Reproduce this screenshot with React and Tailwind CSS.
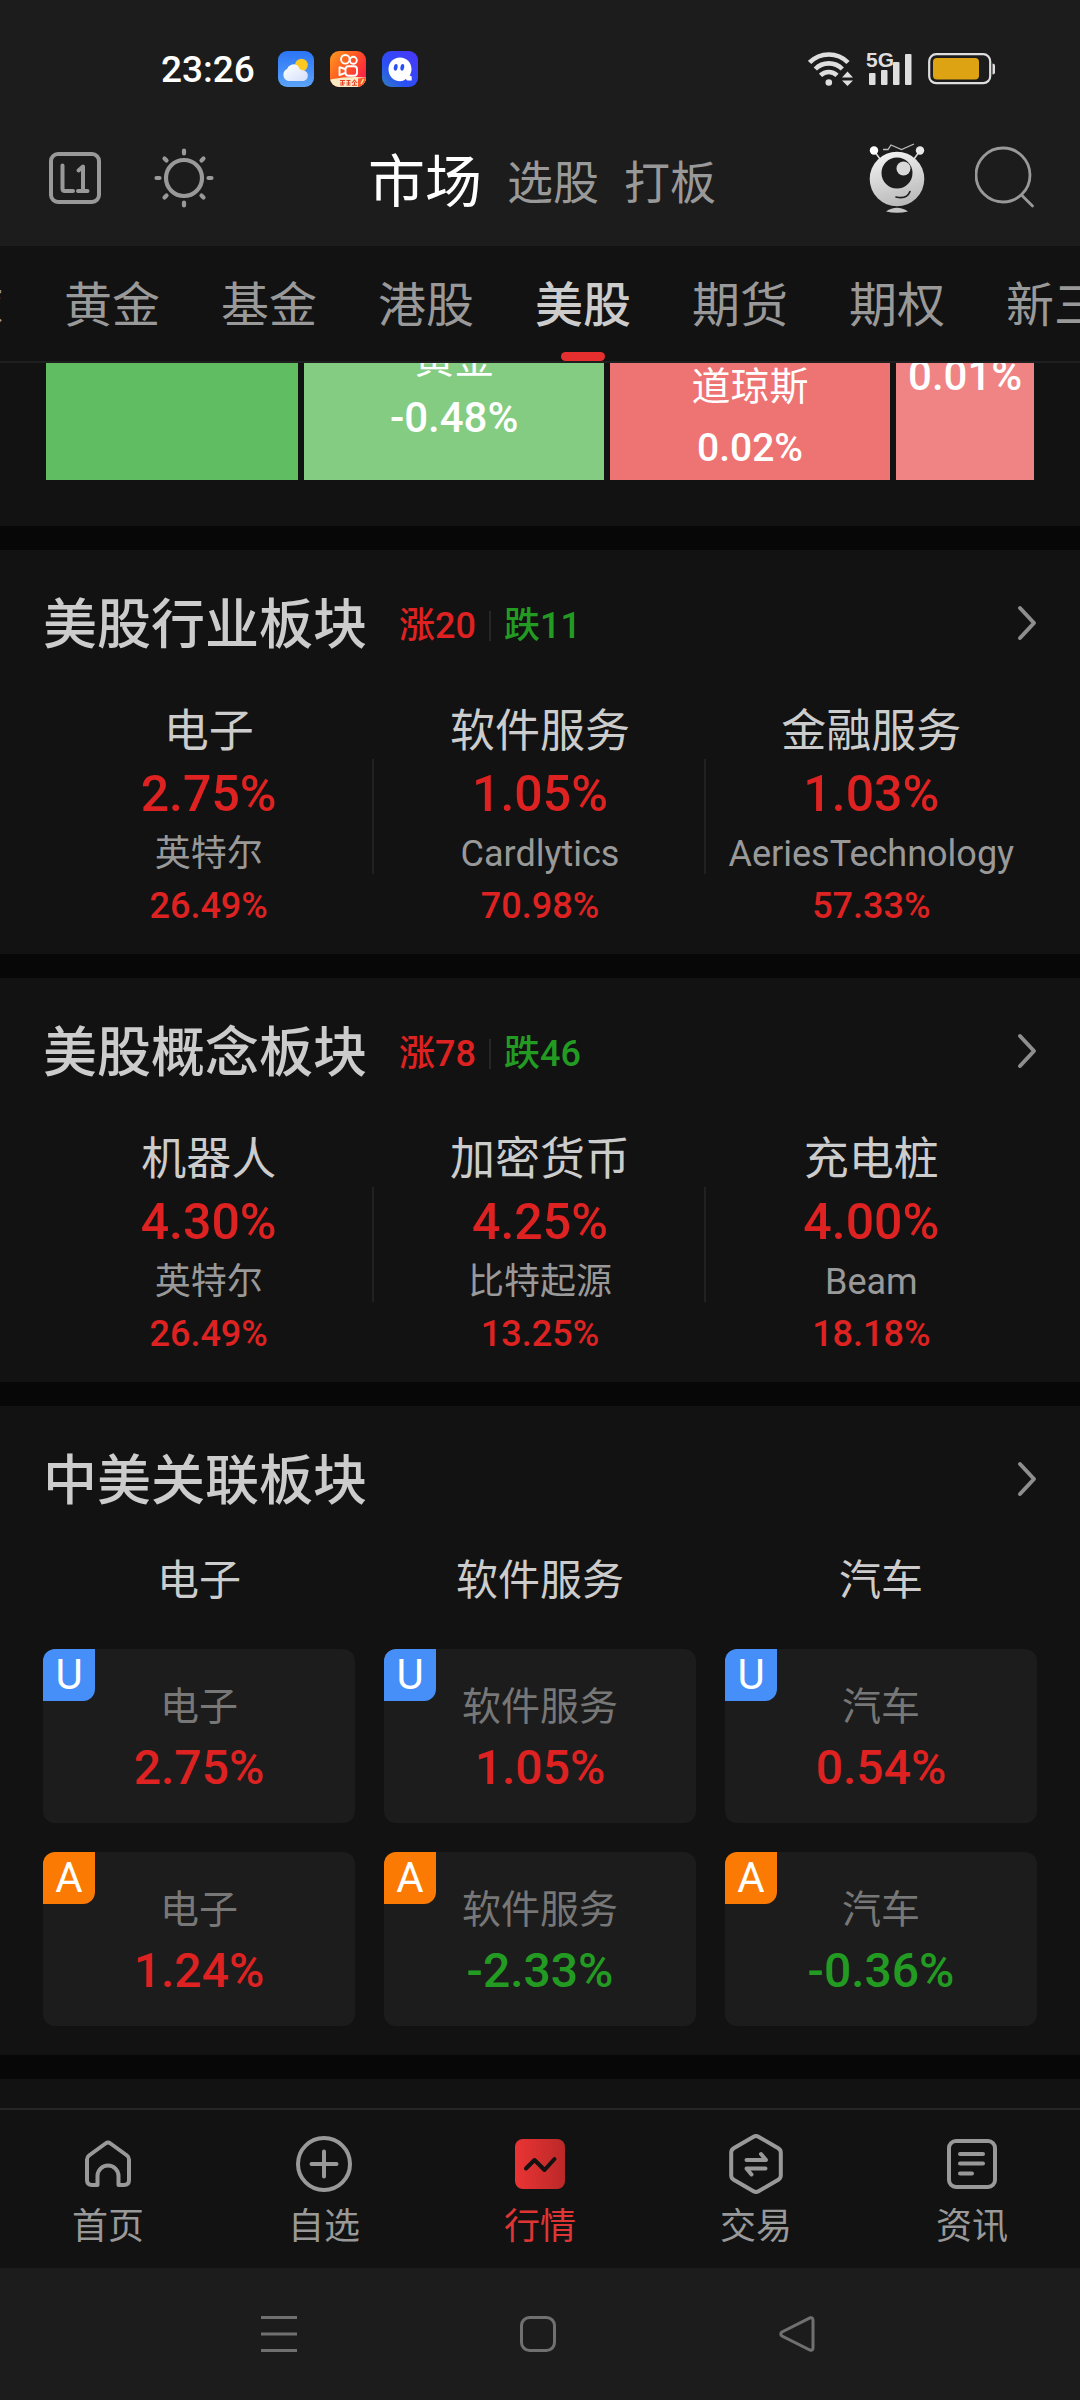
import React from "react";

const CJK = "font-[Roboto,'Noto_Sans_CJK_SC',sans-serif]";

function WeatherIcon() {
  return (
    <svg viewBox="0 0 36 36" className="size-9" role="img" aria-label="天气">
      <defs>
        <linearGradient id="sky" x1="0" y1="0" x2="0" y2="1">
          <stop offset="0" stopColor="#2b74f6" />
          <stop offset="1" stopColor="#5ba4f8" />
        </linearGradient>
        <linearGradient id="cloud" x1="0" y1="0" x2="1" y2="1">
          <stop offset="0" stopColor="#ffffff" />
          <stop offset="1" stopColor="#d3dffa" />
        </linearGradient>
      </defs>
      <rect width="36" height="36" rx="9" fill="url(#sky)" />
      <circle cx="23.5" cy="14" r="6.3" fill="#fdc921" />
      <path d="M11 30a6 6 0 0 1-5.6-6.5c0-3 1.8-4.7 3.6-5.6A7 7 0 0 1 19.5 14.5c1.8 1.7 1.7 4 4 4.5 3.5.5 6.300 1.500 6.300 5.500S27 30 24.500 30z" fill="url(#cloud)" />
    </svg>
  );
}

function VideoIcon() {
  return (
    <svg viewBox="0 0 36 36" className="size-9" role="img" aria-label="视频">
      <defs>
        <linearGradient id="vid" x1="0" y1="0" x2="1" y2="0.7">
          <stop offset="0" stopColor="#ff9b1f" />
          <stop offset="0.5" stopColor="#ff5a22" />
          <stop offset="1" stopColor="#fb1d45" />
        </linearGradient>
        <clipPath id="vidClip"><rect width="36" height="36" rx="9" /></clipPath>
      </defs>
      <g clipPath="url(#vidClip)">
        <rect width="36" height="36" fill="url(#vid)" />
        <g fill="none" stroke="#fff" strokeWidth="1.9">
          <circle cx="15.3" cy="8.3" r="4.3" />
          <circle cx="23.3" cy="9.3" r="3.5" />
          <rect x="15.5" y="15.3" width="11.5" height="9.5" rx="3" />
          <path d="M15 18l-5.500-1.800v8L15 22" strokeLinejoin="round" />
        </g>
        <path d="M0 28.500Q18 25 36 26.500V36H0z" fill="#fbe9c4" />
        <path d="M28 27.500l8-1V36h-8z" fill="#fb5b2c" />
        <path d="M10 29.500h5M10 32h5M10 34h4M12.500 29v5.500M16.500 29.500h4M16.500 32h4M16.500 34h4M18.500 29v5M22 32l2.500-3 2.500 3M22 34.300h5M24.500 31v3" stroke="#e8432c" strokeWidth="1.1" fill="none" />
        <path d="M31 33l2.500-5" stroke="#ffe08a" strokeWidth="1.6" />
      </g>
    </svg>
  );
}

function GhostIcon() {
  return (
    <svg viewBox="0 0 36 36" className="size-9" role="img" aria-label="助手">
      <defs>
        <linearGradient id="gh" x1="0" y1="1" x2="1" y2="0">
          <stop offset="0" stopColor="#2f7fbe" />
          <stop offset="0.35" stopColor="#2a50f5" />
          <stop offset="1" stopColor="#4c35fb" />
        </linearGradient>
      </defs>
      <rect width="36" height="36" rx="9" fill="url(#gh)" />
      <path d="M18 6.500c6.600 0 11.500 5 11.500 11.500 0 2.700-.8 4.800-1.800 6.500l2 1v4h-4.500l-1.400-1.500C22 29.700 20.200 30.200 18 30.200 11.500 30.200 6.500 24.800 6.500 18.200S11.500 6.500 18 6.500z" fill="#fff" />
      <ellipse cx="13.7" cy="16.3" rx="1.9" ry="3.4" fill="#2a50f5" transform="rotate(8 13.7 16.3)" />
      <ellipse cx="20.3" cy="16.3" rx="1.9" ry="3.4" fill="#2a50f5" transform="rotate(8 20.3 16.3)" />
    </svg>
  );
}

function WifiIcon() {
  return (
    <svg viewBox="0 0 46 36" className="h-9 w-[46px]" role="img" aria-label="Wi-Fi">
      <g fill="none" stroke="#dedede" strokeWidth="4.6">
        <path d="M1.600 11.500A27 27 0 0 1 40 11.500" />
        <path d="M7.300 18A19 19 0 0 1 34.300 18" />
        <path d="M12.500 24.300A12 12 0 0 1 29 24.300" />
      </g>
      <circle cx="20.8" cy="31.5" r="3.3" fill="#dedede" />
      <path d="M34 26.500l5.500-6 5.500 6zM34 29.500l5.500 5.500 5.500-5.500z" fill="#dedede" />
    </svg>
  );
}

function SignalIcon() {
  return (
    <span className="relative block h-9 w-[46px]">
      <span className="absolute top-0 left-0 font-['Liberation_Sans_Narrow','Liberation_Sans',sans-serif] text-[21px] leading-[18px] font-bold text-[#dedede]">5G</span>
      <svg viewBox="0 0 46 36" className="h-9 w-[46px]" role="img" aria-label="信号">
        <g fill="#dedede">
          <rect x="3" y="22" width="6.5" height="12" rx="1" />
          <rect x="15" y="19" width="6.5" height="15" rx="1" />
          <rect x="27" y="11" width="6.5" height="23" rx="1" />
          <rect x="39" y="3" width="6.5" height="31" rx="1" />
        </g>
      </svg>
    </span>
  );
}

function BatteryIcon() {
  return (
    <svg viewBox="0 0 68 32" className="h-8 w-[68px]" role="img" aria-label="电量">
      <rect x="1.2" y="1.2" width="61" height="29" rx="7" fill="none" stroke="#dedede" strokeWidth="2.2" />
      <rect x="5" y="5" width="46" height="21.5" rx="4" fill="#dda312" />
      <path d="M64.500 10.500q2.500 0 2.500 2v7q0 2-2.500 2z" fill="#dedede" />
    </svg>
  );
}

function LevelIcon() {
  return (
    <svg viewBox="0 0 52 52" className="size-[52px]" fill="none" stroke="#999" strokeWidth="4" strokeLinecap="round" strokeLinejoin="round">
      <rect x="2" y="2" width="48" height="48" rx="7" />
      <path d="M13.500 13.500v23q0 2.500 2.500 2.500h8M29.500 18.500l4.500-4V39M29 39h9.500" />
    </svg>
  );
}

function SunIcon() {
  return (
    <svg viewBox="0 0 60 60" className="size-[60px]" fill="none" stroke="#999" strokeWidth="4.2" strokeLinecap="round">
      <circle cx="30" cy="30" r="18" />
      <path d="M30 2.500v3M30 54.500v3M2.500 30h3M54.500 30h3M10.500 10.500l2 2M47.500 47.500l2 2M10.500 49.500l2-2M47.500 12.500l2-2" />
    </svg>
  );
}

function MascotIcon() {
  return (
    <svg viewBox="0 0 56 70" className="h-[70px] w-14">
      <defs>
        <linearGradient id="body" x1="0.3" y1="0" x2="0.6" y2="1">
          <stop offset="0" stopColor="#f2f2f2" />
          <stop offset="1" stopColor="#b8b8b8" />
        </linearGradient>
      </defs>
      <path d="M6 9l5 7M50 9l-5 7" stroke="#ddd" strokeWidth="1.5" />
      <circle cx="5" cy="7.5" r="4.2" fill="#fff" />
      <circle cx="51" cy="7.5" r="4.2" fill="#e8e8e8" />
      <path d="M14 6.500h5l3-4.500 10.500 4.500L45 1" fill="none" stroke="#bbb" strokeWidth="1.3" />
      <circle cx="28" cy="36" r="27.3" fill="url(#body)" />
      <circle cx="28" cy="30" r="15.5" fill="#1c1c1c" />
      <circle cx="34.5" cy="25.5" r="7" fill="#d8d8d8" />
      <path d="M27 54Q38 56.500 41 48.500" fill="none" stroke="#1c1c1c" strokeWidth="1.6" strokeLinecap="round" />
      <path d="M17 68.500Q28 61 39 68.500Q28 71 17 68.500z" fill="#c4c4c4" />
    </svg>
  );
}

function SearchIcon() {
  return (
    <svg viewBox="0 0 60 62" className="h-[62px] w-[60px]" fill="none" stroke="#999" strokeWidth="2.8" strokeLinecap="round">
      <circle cx="28" cy="29" r="27" />
      <path d="M47 49.500L57.500 60" />
    </svg>
  );
}

function Chevron() {
  return (
    <svg viewBox="0 0 20 36" className="h-9 w-5" fill="none" stroke="#8e8e8e" strokeWidth="4" strokeLinecap="round" strokeLinejoin="round">
      <path d="M3 3l14 15L3 33" />
    </svg>
  );
}

const TABS = ["全球", "黄金", "基金", "港股", "美股", "期货", "期权", "新三板"];

function TabBar() {
  return (
    <nav className="overflow-hidden border-b-2 border-[#1f1f1f] bg-[#121212]">
      <div className="-ml-[93px] flex gap-[61px]">
        {TABS.map((t) => {
          const active = t === "美股";
          return (
            <button key={t} className="relative flex h-[115px] shrink-0 items-center pt-[5px]">
              <span className={active ? "text-[48px] leading-[60px] font-medium text-[#ccc]" : "text-[48px] leading-[60px] text-[#999]"}>{t}</span>
              {active && <span className="absolute bottom-0 left-1/2 h-[9px] w-11 -translate-x-1/2 rounded-full bg-[#e52e2e]" />}
            </button>
          );
        })}
      </div>
    </nav>
  );
}

function HeatMap() {
  return (
    <section className="bg-[#121212] px-[46px] pb-[46px] text-center text-white">
      <div className="flex h-[117px] gap-[6px] overflow-hidden">
        <div className="flex-[253] bg-[#61bd62]" />
        <div className="flex flex-[300] flex-col items-center justify-end bg-[#84cc82] pb-[35px]">
          <p className="text-[40px] leading-[62px]">黄金</p>
          <p className="text-[42px] leading-[54px] font-medium">-0.48%</p>
        </div>
        <div className="flex flex-[281] flex-col items-center justify-end bg-[#ee7373] pb-[7px]">
          <p className="pb-[5px] text-[39px] leading-[62px]">道琼斯</p>
          <p className="text-[39px] leading-[50px] font-medium">0.02%</p>
        </div>
        <div className="flex flex-[138] flex-col items-center justify-end bg-[#f08383] pb-[77px]">
          <p className="text-[42px] leading-[54px] font-medium">0.01%</p>
        </div>
      </div>
    </section>
  );
}

function SectionHead({ title, up, down }) {
  return (
    <header className="flex items-center">
      <h2 className="text-[54px] leading-[64px] font-medium text-[#ccc]">{title}</h2>
      {up && (
        <p className="ml-[32px] flex items-center text-[36px] leading-[44px] font-medium">
          <span className="text-[#de2222]">涨{up}</span>
          <span className="mx-[13px] h-[30px] w-[2px] bg-[#262626]" />
          <span className="text-[#239b23]">跌{down}</span>
        </p>
      )}
      <button aria-label={title + "更多"} className="mb-[7px] ml-auto"><Chevron /></button>
    </header>
  );
}

function SectorSection({ title, up, down, items }) {
  return (
    <section className="bg-[#121212] px-[43px] pt-[44px] pb-[26px]">
      <SectionHead title={title} up={up} down={down} />
      <ul className="mt-[47px] grid grid-cols-3">
        {items.map(([name, pct, stock, stockPct], i) => (
          <li key={name} className="relative flex flex-col items-center whitespace-nowrap">
            <span className="text-[45px] leading-[54px] text-[#ccc]">{name}</span>
            <span className="mt-[4px] text-[50px] leading-[62px] font-medium text-[#de2222]">{pct}</span>
            <span className="mt-[7px] text-[36px] leading-[44px] text-[#999]">{stock}</span>
            <span className="mt-[8px] text-[36px] leading-[44px] font-medium text-[#de2222]">{stockPct}</span>
            {i < 2 && <span className="absolute top-[54px] right-0 h-[115px] w-[2px] bg-[#212121]" />}
          </li>
        ))}
      </ul>
    </section>
  );
}

const PAIRS = [
  { mark: "U", badge: "bg-[#468ff8]", cells: [["电子", "2.75%"], ["软件服务", "1.05%"], ["汽车", "0.54%"]] },
  { mark: "A", badge: "bg-[#fb7a03]", cells: [["电子", "1.24%"], ["软件服务", "-2.33%"], ["汽车", "-0.36%"]] },
];

function LinkedSection() {
  return (
    <section className="bg-[#121212] px-[43px] pt-[44px] pb-[29px]">
      <SectionHead title="中美关联板块" />
      <div className="mt-[42px] grid grid-cols-3 gap-x-[29px] text-center text-[42px] leading-[50px] text-[#ccc]">
        <h3>电子</h3>
        <h3>软件服务</h3>
        <h3>汽车</h3>
      </div>
      <div className="mt-[43px] grid grid-cols-3 gap-[29px]">
        {PAIRS.map((row) =>
          row.cells.map(([name, pct]) => (
            <article key={row.mark + name} className="relative flex flex-col items-center rounded-xl bg-[#1c1c1c] pt-[33px] pb-[25px]">
              <span className={"absolute top-0 left-0 flex size-[52px] items-center justify-center rounded-tl-xl rounded-br-xl text-[42px] leading-[52px] text-white " + row.badge}>{row.mark}</span>
              <span className="text-[39px] leading-[50px] text-[#777]">{name}</span>
              <span className={pct.startsWith("-") ? "mt-[6px] text-[48px] leading-[60px] font-medium text-[#239b23]" : "mt-[6px] text-[48px] leading-[60px] font-medium text-[#de2222]"}>{pct}</span>
            </article>
          ))
        )}
      </div>
    </section>
  );
}

const NAV = [
  {
    label: "首页",
    icon: <path d="M30 8.500q1.200 0 2.500 1L49 21.500q2 1.500 2 4V46q0 5-5 5h-5.500V42a10.500 10.500 0 0 0-21 0v9H14q-5 0-5-5V25.500q0-2.500 2-4L27.500 9.500q1.300-1 2.500-1z" />,
  },
  {
    label: "自选",
    icon: (
      <>
        <circle cx="30" cy="30" r="26" />
        <path d="M30 17.500v25M17.500 30h25" />
      </>
    ),
  },
  {
    label: "行情",
    active: true,
    icon: (
      <>
        <defs>
          <linearGradient id="mk" x1="0" y1="0" x2="1" y2="0">
            <stop offset="0" stopColor="#ea3434" />
            <stop offset="1" stopColor="#bb2828" />
          </linearGradient>
        </defs>
        <rect x="5" y="5" width="50" height="50" rx="8" fill="url(#mk)" stroke="none" />
        <path d="M16 34.500l8.500-8.500 10 10 10-11" stroke="#121212" />
      </>
    ),
  },
  {
    label: "交易",
    icon: (
      <>
        <path d="M27.500 2.800q2.500-1.500 5 0L52.300 14.200q2.500 1.500 2.500 4.500v22.600q0 3-2.500 4.500L32.500 57.200q-2.500 1.500-5 0L7.700 45.800q-2.500-1.500-2.500-4.500V18.700q0-3 2.500-4.500z" />
        <path d="M20.500 26h19.500l-5-6M39.500 34.500H20.500l5 6" />
      </>
    ),
  },
  {
    label: "资讯",
    icon: (
      <>
        <rect x="7" y="7" width="46" height="46" rx="7" />
        <path d="M18 20h23M18 29.500h23M18 39.500h12" />
      </>
    ),
  },
];

function BottomNav() {
  return (
    <nav className="grid grid-cols-5 border-t-2 border-[#262626] bg-[#121212] pt-[24px] pb-[18px]">
      {NAV.map((n) => (
        <button key={n.label} className={n.active ? "flex flex-col items-center text-[#e03535]" : "flex flex-col items-center text-[#999]"}>
          <svg viewBox="0 0 60 60" className="size-[60px]" fill="none" stroke="currentColor" strokeWidth="4" strokeLinecap="round" strokeLinejoin="round">{n.icon}</svg>
          <span className="mt-[10px] text-[36px] leading-[46px]">{n.label}</span>
        </button>
      ))}
    </nav>
  );
}

function SystemBar() {
  const shapes = [
    ["最近任务", <path key="m" d="M0 1.500h36M0 18h36M0 34.500h36" />],
    ["主屏幕", <rect key="h" x="1.5" y="1.5" width="33" height="33" rx="8" />],
    ["返回", <path key="b" d="M31 1.800L3 16q-2.500 2 0 4L31 34q3 .8 3-2.500V4.500Q34 1 31 1.800z" />],
  ];
  return (
    <footer className="grid grid-cols-3 bg-[#1c1c1c] pt-[48px] pr-[154px] pb-[48px] pl-[150px]">
      {shapes.map(([label, d]) => (
        <button key={label} aria-label={label} className="flex justify-center">
          <svg viewBox="0 0 36 36" className="size-9" fill="none" stroke="#707070" strokeWidth="3">{d}</svg>
        </button>
      ))}
    </footer>
  );
}

export default function App() {
  return (
    <div className={"flex min-h-screen flex-col overflow-hidden bg-[#121212] " + CJK}>
      <div className="bg-[#1c1c1c]">
        <div className="flex h-[138px] items-center pr-[84px] pl-[161px]">
          <span className="pt-[2px] text-[37px] leading-[44px] font-medium text-white">23:26</span>
          <div className="ml-[23px] flex gap-4">
            <WeatherIcon />
            <VideoIcon />
            <GhostIcon />
          </div>
          <div className="ml-auto flex items-center">
            <WifiIcon />
            <span className="mr-4 ml-3"><SignalIcon /></span>
            <BatteryIcon />
          </div>
        </div>
        <header className="grid h-[108px] grid-cols-[1fr_auto_1fr] items-start pr-[45px] pl-[49px]">
          <div className="flex items-center gap-[53px] pt-[10px]">
            <button aria-label="L1"><LevelIcon /></button>
            <button aria-label="亮度"><SunIcon /></button>
          </div>
          <nav className="flex items-center gap-[25px] pt-[11px] text-[46px] leading-[68px] text-[#999]">
            <button className="text-[57px] text-white">市场</button>
            <button>选股</button>
            <button>打板</button>
          </nav>
          <div className="flex items-start justify-end gap-[50px] pt-[5px]">
            <button aria-label="助手"><MascotIcon /></button>
            <button aria-label="搜索" className="pt-[3px]"><SearchIcon /></button>
          </div>
        </header>
      </div>
      <TabBar />
      <main className="flex flex-1 flex-col gap-6 bg-[#070707]">
        <HeatMap />
        <SectorSection
          title="美股行业板块"
          up="20"
          down="11"
          items={[
            ["电子", "2.75%", "英特尔", "26.49%"],
            ["软件服务", "1.05%", "Cardlytics", "70.98%"],
            ["金融服务", "1.03%", "AeriesTechnology", "57.33%"],
          ]}
        />
        <SectorSection
          title="美股概念板块"
          up="78"
          down="46"
          items={[
            ["机器人", "4.30%", "英特尔", "26.49%"],
            ["加密货币", "4.25%", "比特起源", "13.25%"],
            ["充电桩", "4.00%", "Beam", "18.18%"],
          ]}
        />
        <LinkedSection />
        <div className="flex-1 bg-[#121212]" />
      </main>
      <BottomNav />
      <SystemBar />
    </div>
  );
}
